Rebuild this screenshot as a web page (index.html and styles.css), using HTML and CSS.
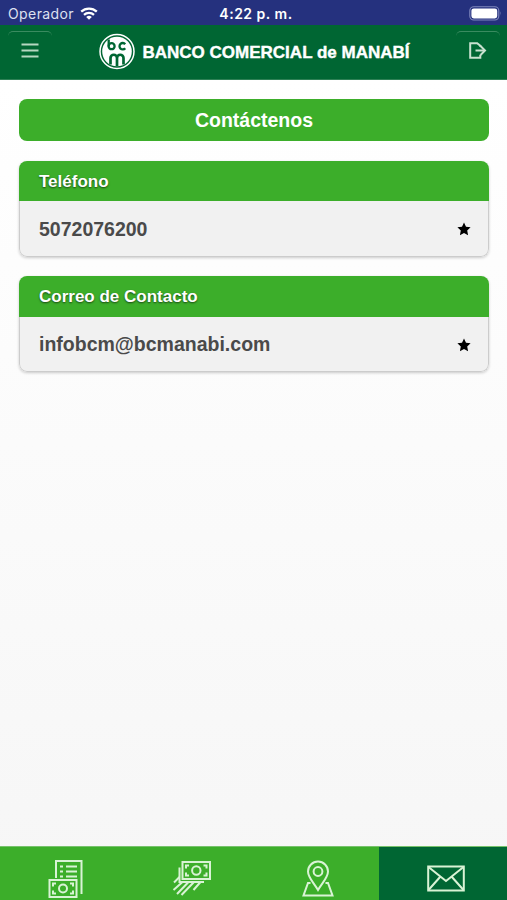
FILE: index.html
```html
<!DOCTYPE html>
<html lang="es">
<head>
  <meta charset="UTF-8">
  <meta name="viewport" content="width=device-width, initial-scale=1.0">
  <title>Banco Comercial de Manabí</title>
  <link rel="stylesheet" href="styles.css">
</head>
<body>
  <div class="app">

    <div class="status-bar">
      <div class="carrier">
        <span>Operador</span>
        <svg class="wifi" width="18" height="13" viewBox="0 0 18 13" fill="none" stroke="#fff" stroke-width="2.3">
          <path d="M1.2 4.7a11.3 11.3 0 0 1 15.6 0"/>
          <path d="M4 7.8a7.3 7.3 0 0 1 10 0"/>
          <path d="M6.2 10.1a4.1 4.1 0 0 1 5.6 0L9 12.8z" fill="#fff" stroke="none"/>
        </svg>
      </div>
      <span class="time">4:22 p. m.</span>
      <svg class="battery" width="33" height="15" viewBox="0 0 33 15">
        <rect x=".8" y=".8" width="29" height="13.2" rx="4" fill="none" stroke="#8088bd" stroke-width="1.1"/>
        <rect x="2.4" y="2.4" width="25.8" height="10" rx="2.4" fill="#fff"/>
        <path d="M31.2 5.3q1.3 2.1 0 4.2z" fill="#8088bd"/>
      </svg>
    </div>

    <header class="header">
      <button class="header-btn" aria-label="Menú">
        <svg width="18" height="16" viewBox="0 0 18 16" stroke="#b5d8c1" stroke-width="2">
          <path d="M.5 1.5h17M.5 7.5h17M.5 13.5h17"/>
        </svg>
      </button>
      <svg class="brand" width="314" height="38" viewBox="0 0 314 38">
        <circle cx="19" cy="18.5" r="17" fill="none" stroke="#fff" stroke-width="1.5"/>
        <circle cx="19" cy="18.5" r="14.8" fill="#fff"/>
        <g fill="none" stroke="#006633" stroke-width="2.3">
          <path d="M10.7 6.5v7"/>
          <circle cx="13.6" cy="13.2" r="3"/>
          <path d="M27.2 11.2a3.2 3.2 0 1 0 0 4"/>
          <path d="M12.5 31.5v-6.5a3.25 3.25 0 0 1 6.5 0v8.3M19 25a3.25 3.25 0 0 1 6.5 0v6.5" stroke-width="2.7"/>
        </g>
        <text class="brand-name" x="44.5" y="25" textLength="267" lengthAdjust="spacingAndGlyphs">BANCO COMERCIAL de MANABÍ</text>
      </svg>
      <button class="header-btn" aria-label="Salir">
        <svg width="18" height="18" viewBox="0 0 18 18" fill="none" stroke="#c9e1d0" stroke-width="2">
          <path d="M11.3 5V3.800L8.200 1.200H1.200v14.600h10.100v-3"/>
          <path d="M6.500 8.500h9"/>
          <path d="M11.500 4 16 8.500 11.500 13"/>
        </svg>
      </button>
    </header>

    <main class="content">
      <h1 class="page-title">Contáctenos</h1>

      <section class="card">
        <h2 class="card-title">Teléfono</h2>
        <div class="card-row">
          <span>5072076200</span>
          <svg class="star" viewBox="0 0 14 14"><path d="M7 .5 9 4.700l4.600.6-3.400 3.200.9 4.700L7 10.900l-4.100 2.300.9-4.700L.4 5.300 5 4.700z"/></svg>
        </div>
      </section>

      <section class="card">
        <h2 class="card-title">Correo de Contacto</h2>
        <div class="card-row">
          <span>infobcm@bcmanabi.com</span>
          <svg class="star" viewBox="0 0 14 14"><path d="M7 .5 9 4.700l4.600.6-3.400 3.200.9 4.700L7 10.900l-4.100 2.300.9-4.700L.4 5.300 5 4.700z"/></svg>
        </div>
      </section>
    </main>

    <nav class="tabs">
      <!-- Cuentas -->
      <a class="tab">
        <svg width="36" height="40" viewBox="0 0 36 40">
          <path d="M8 18V1h25.500v33"/>
          <path d="M12 6.500h3M12 11.500h3M12 16.500h3M18 6.500h11M18 11.500h11M18 16.500h11"/>
          <rect x="1.500" y="20" width="27" height="17"/>
          <circle cx="15" cy="28.500" r="4"/>
          <path d="M5 26.500v-3h3M22 23.500h3v3M25 30.500v3h-3M8 33.500H5v-3"/>
        </svg>
      </a>
      <!-- Transferencias -->
      <a class="tab">
        <svg width="40" height="40" viewBox="0 0 40 40">
          <rect x="10.500" y="2" width="27.500" height="17"/>
          <circle cx="24.300" cy="10.500" r="4.200"/>
          <path d="M14 8.500v-3h3M31.500 5.500h3v3M34.500 12.500v3h-3M17 15.500h-3v-3"/>
          <path d="M7.500 7.500V22H32"/>
          <path d="M7.500 17 2 22.500M10.500 22 1.500 30M16.500 22 5 34M22 22 9.500 35M28.500 22l-7 8"/>
        </svg>
      </a>
      <!-- Ubicaciones -->
      <a class="tab">
        <svg width="34" height="40" viewBox="0 0 34 40">
          <path d="M17 30C12.500 22.500 7 17.500 7 11.500a10 10 0 0 1 20 0c0 6-5.500 11-10 18.500z"/>
          <circle cx="17" cy="11.500" r="4.400"/>
          <path d="M9.500 23H7L2.500 35.500h29L27 23h-2.500"/>
        </svg>
      </a>
      <!-- Contacto -->
      <a class="tab active">
        <svg width="38" height="40" viewBox="0 0 38 40">
          <rect x="1.200" y="6.500" width="35.600" height="24"/>
          <path d="M1.500 7 19 21 36.500 7M1.500 30l12-13.500M36.500 30l-12-13.500"/>
        </svg>
      </a>
    </nav>

  </div>
</body>
</html>
```
FILE: styles.css
```css
:root {
  --green: #3cae2a;
  --green-dark: #006633;
  --blue: #25317e;
}

* { box-sizing: border-box; margin: 0; padding: 0; }

body {
  font-family: "Liberation Sans", Arial, Helvetica, sans-serif;
}

.app {
  display: flex;
  flex-direction: column;
  height: 100vh;
  background: linear-gradient(#fff 80px, #f6f6f6);
}

/* Status bar */
.status-bar {
  display: grid;
  grid-template-columns: 1fr auto 1fr;
  align-items: center;
  height: 25px;
  padding: 2px 5px 0 8px;
  background: var(--blue);
  color: #fff;
  font-family: Inter, sans-serif;
  font-size: 14px;
}

.carrier {
  display: flex;
  align-items: center;
  gap: 6px;
  color: #dde0f0;
  letter-spacing: .4px;
}

.time { padding-left: 2px; font-weight: 600; letter-spacing: .5px; }
.battery { justify-self: end; }

/* Header */
.header {
  display: flex;
  justify-content: space-between;
  height: 55px;
  padding: 6px 7px 0 8px;
  background: var(--green-dark);
  border-bottom: 1px solid #2d8055;
}

.header-btn {
  width: 44px;
  height: 38px;
  background: none;
  border: 0;
  border-top: 1px solid #3a8b60;
  border-radius: 5px;
}

.header-btn svg { display: block; margin: 0 auto; }

.brand { margin: 2px 0 0 2px; }

.brand-name {
  fill: #fff;
  stroke: #fff;
  stroke-width: .4px;
  font-size: 17px;
  font-weight: 700;
}

/* Content */
.content {
  flex: 1;
  display: flex;
  flex-direction: column;
  gap: 19.5px;
  padding: 19px 18px 0 19px;
}

.page-title {
  height: 42px;
  background: var(--green);
  border-radius: 8px;
  color: #fff;
  font-size: 19.5px;
  line-height: 42px;
  text-align: center;
}

.card {
  height: 96px;
  border-radius: 8px;
  overflow: hidden;
  box-shadow: 0 1px 3px rgba(0, 0, 0, .2);
}

.card-title {
  height: 40.5px;
  padding-left: 20px;
  background: var(--green);
  color: #fff;
  font-size: 17px;
  line-height: 41px;
  text-shadow: 0 1px 2px rgba(0, 0, 0, .6);
}

.card-row {
  display: flex;
  align-items: center;
  justify-content: space-between;
  height: 55.5px;
  padding: 2px 17px 0 19px;
  background: #f1f1f1;
  border: 1px solid #ccc;
  border-top: 0;
  border-radius: 0 0 8px 8px;
  color: #4a4a4a;
  font-size: 19.5px;
  font-weight: 700;
}

.star { width: 14px; height: 14px; }

/* Bottom tabs */
.tabs {
  display: grid;
  grid-template-columns: repeat(3, 126.2px) 1fr;
  height: 54px;
  background: var(--green);
}

.tab {
  display: flex;
  align-items: flex-start;
  justify-content: center;
  padding: 13px 0 0 6px;
  border-top: 1px solid #77c26b;
}

.tab svg {
  fill: none;
  stroke: #d9f3d5;
  stroke-width: 2;
}

.tab.active { background: var(--green-dark); }
```
